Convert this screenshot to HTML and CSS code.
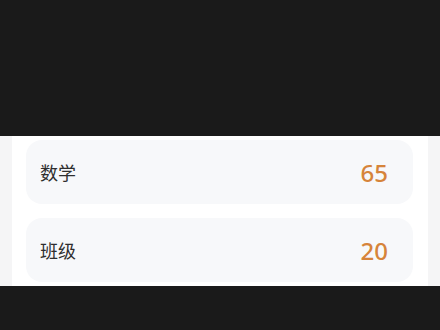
FILE: index.html
```html
<!DOCTYPE html>
<html lang="zh">
<head>
<meta charset="utf-8">
<link rel="stylesheet" href="styles.css">
</head>
<body>
<div class="top"></div>
<div class="panel">
  <div class="side"></div>
  <div class="list">
    <div class="card"><span class="label">数学</span><span class="value">65</span></div>
    <div class="card"><span class="label">班级</span><span class="value">20</span></div>
  </div>
  <div class="side"></div>
</div>
</body>
</html>
```
FILE: styles.css
```css
html, body {
  margin: 0;
  padding: 0;
  background: #1a1a1a;
  width: 440px;
  height: 330px;
  overflow: hidden;
}
.top {
  height: 136px;
}
.panel {
  height: 150px;
  display: flex;
  background: #ffffff;
}
.side {
  width: 12px;
  background: #f5f5f6;
}
.list {
  flex: 1;
  display: flex;
  flex-direction: column;
  gap: 14px;
  padding: 4px 15px 0 14px;
}
.card {
  height: 64px;
  border-radius: 16px;
  background: #f7f8fa;
  display: flex;
  align-items: center;
  justify-content: space-between;
  padding: 0 25px 0 14px;
}
.label {
  font-family: "Noto Sans CJK SC", "Noto Sans", sans-serif;
  font-size: 18px;
  color: #2e2e2e;
}
.value {
  font-family: "Noto Sans", "Open Sans", sans-serif;
  font-size: 24px;
  font-weight: 500;
  color: #d6843a;
}
```
